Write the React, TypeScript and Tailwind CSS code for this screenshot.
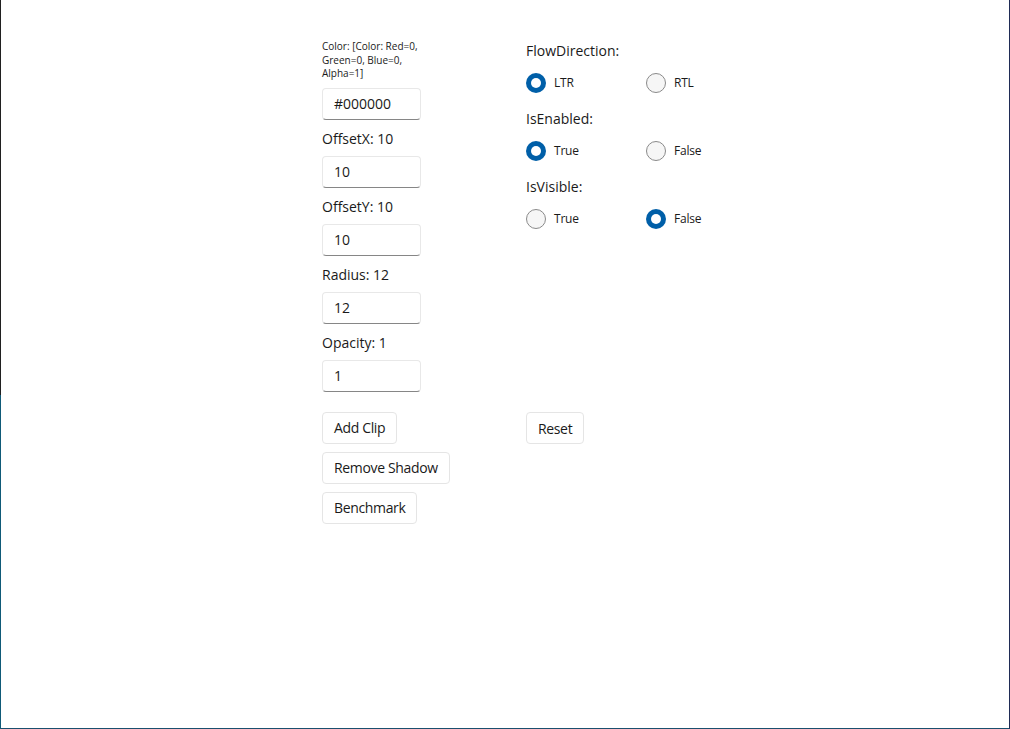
import React, { useState } from 'react';

const font = { fontFamily: '"Open Sans", "Noto Sans", sans-serif' };

interface RadioProps {
  label: string;
  checked: boolean;
  onSelect: () => void;
}

const Radio: React.FC<RadioProps> = ({ label, checked, onSelect }) => (
  <button type="button" onClick={onSelect} className="flex w-[120px] items-center gap-2 text-left">
    {checked ? (
      <span className="flex h-5 w-5 items-center justify-center rounded-full bg-[#005fa8]">
        <span className="h-[10px] w-[10px] rounded-full bg-white" />
      </span>
    ) : (
      <span className="h-5 w-5 rounded-full border border-[#8a8a8a] bg-[#f6f6f6]" />
    )}
    <span className="text-[12px] tracking-[-0.2px] text-[#1a1a1a]">{label}</span>
  </button>
);

const Field: React.FC<{ value: string }> = ({ value }) => (
  <div className="flex h-8 w-[99px] items-center rounded-[4px] border border-[#e8e8e8] border-b-[#868686] bg-white px-[11px] text-[14px] text-[#1a1a1a]">
    {value}
  </div>
);

const Btn: React.FC<{ label: string }> = ({ label }) => (
  <button
    type="button"
    className="flex h-8 items-center rounded-[4px] border border-[#e5e5e5] bg-white px-[11px] text-[14px] tracking-[-0.35px] text-[#1a1a1a]"
  >
    {label}
  </button>
);

export default function App() {
  const [flow, setFlow] = useState<'LTR' | 'RTL'>('LTR');
  const [enabled, setEnabled] = useState(true);
  const [visible, setVisible] = useState(false);

  const rows = [
    { label: 'OffsetX: 10', value: '10' },
    { label: 'OffsetY: 10', value: '10' },
    { label: 'Radius: 12', value: '12' },
    { label: 'Opacity: 1', value: '1' },
  ];

  return (
    <div className="flex h-[729px] w-[1010px] overflow-hidden" style={font}>
      <div className="flex w-px flex-col">
        <div className="h-[395px] bg-[#202020]" />
        <div className="flex-1 bg-[#0f5a78]" />
      </div>
      <div className="flex flex-1 border-b border-r border-b-[#1a4f6e] border-r-[#1f2b55] bg-white pl-[321px] pt-[40px]">
        {/* left column */}
        <div className="flex w-[204px] flex-col">
          <div className="text-[10px] leading-[13.5px] text-[#1a1a1a]">
            <div>Color: [Color: Red=0,</div>
            <div>Green=0, Blue=0,</div>
            <div>Alpha=1]</div>
          </div>
          <div className="mt-[7px]">
            <Field value="#000000" />
          </div>
          {rows.map((r) => (
            <div key={r.label} className="flex flex-col">
              <div className="mt-[9px] h-5 text-[14px] leading-5 text-[#1a1a1a]">{r.label}</div>
              <div className="mt-[7px]">
                <Field value={r.value} />
              </div>
            </div>
          ))}
          <div className="mt-5 flex flex-col items-start gap-2">
            <Btn label="Add Clip" />
            <Btn label="Remove Shadow" />
            <Btn label="Benchmark" />
          </div>
        </div>

        {/* right column */}
        <div className="flex flex-col">
          <div className="mt-px h-5 text-[14px] leading-5 text-[#1a1a1a]">FlowDirection:</div>
          <div className="mt-[7px] flex h-[30px] items-center">
            <Radio label="LTR" checked={flow === 'LTR'} onSelect={() => setFlow('LTR')} />
            <Radio label="RTL" checked={flow === 'RTL'} onSelect={() => setFlow('RTL')} />
          </div>
          <div className="mt-[11px] h-5 text-[14px] leading-5 text-[#1a1a1a]">IsEnabled:</div>
          <div className="mt-[7px] flex h-[30px] items-center">
            <Radio label="True" checked={enabled} onSelect={() => setEnabled(true)} />
            <Radio label="False" checked={!enabled} onSelect={() => setEnabled(false)} />
          </div>
          <div className="mt-[11px] h-5 text-[14px] leading-5 text-[#1a1a1a]">IsVisible:</div>
          <div className="mt-[7px] flex h-[30px] items-center">
            <Radio label="True" checked={visible} onSelect={() => setVisible(true)} />
            <Radio label="False" checked={!visible} onSelect={() => setVisible(false)} />
          </div>
          <div className="mt-[178px] flex">
            <Btn label="Reset" />
          </div>
        </div>
      </div>
    </div>
  );
}
